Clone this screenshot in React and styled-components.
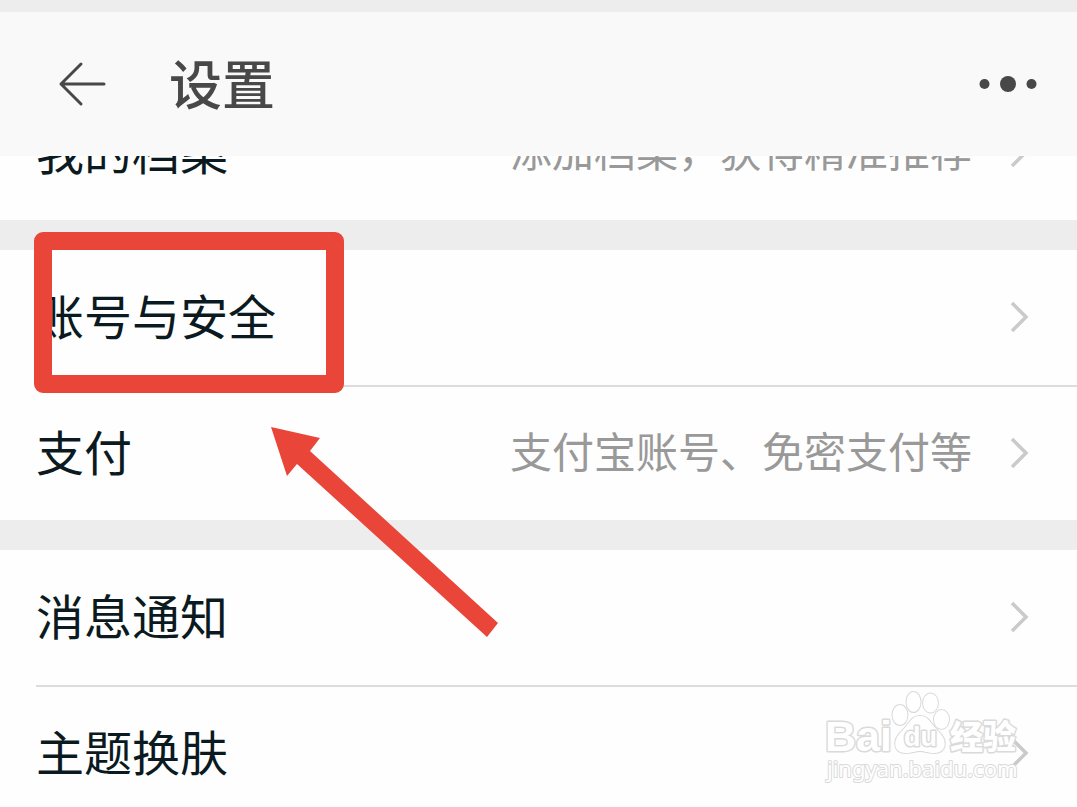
import React from "react";
import styled, { createGlobalStyle } from "styled-components";

const markColor = '#e94639';

const GlobalStyle = createGlobalStyle`
  * {
    box-sizing: border-box;
  }

  body {
    margin: 0;
    background: #fefefe;
    font-family: "Noto Sans CJK SC", "Noto Sans", sans-serif;
  }
`

const Screen = styled.div`
  position: relative;
  height: 100vh;
  overflow: hidden;
  background: #fefefe;
`

const Header = styled.header`
  position: sticky;
  top: 0;
  z-index: 1;
  display: flex;
  align-items: center;
  height: 156px;
  padding: 0 36px 0 56px;
  border-top: 12px solid #ededed;
  background: #f9f9f9;
`

const IconButton = styled.button`
  display: flex;
  padding: 0;
  border: none;
  background: none;
  color: #484848;
`

const Title = styled.h1`
  flex: 1;
  margin: 0 0 0 61px;
  padding-bottom: 4px;
  font-size: 53px;
  line-height: 72px;
  font-weight: 500;
  color: #484848;
`

/* the list is scrolled, its first row is half under the header */
const Content = styled.main`
  margin-top: -71px;
`

const Group = styled.ul`
  position: relative;
  margin: 0;
  padding: 0;
  list-style: none;

  &:not(:first-child) {
    border-top: 30px solid #ededed;
  }
`

const Item = styled.li`
  padding-left: 36px;
`

const Row = styled.a`
  display: flex;
  align-items: center;
  height: 135px;
  padding-right: 44px;
  color: #0a1a20;
  text-decoration: none;

  ${Item}:not(:first-child) > & {
    border-top: 2px solid #dcdcdc;
  }
`

const Label = styled.span`
  flex: 1;
  padding-bottom: 8px;
  font-size: 48px;
  line-height: 64px;
`

const Value = styled.span`
  margin-right: 37px;
  padding-bottom: 8px;
  font-size: 42px;
  line-height: 64px;
  color: #999;
`

const HighlightBox = styled.div`
  position: absolute;
  top: -18px;
  left: 34px;
  width: 310px;
  height: 161px;
  border: 18px solid ${markColor};
  border-radius: 9px;
`

const Arrow = styled.svg`
  position: absolute;
  top: 176px;
  left: 270px;
  z-index: 1;
  fill: ${markColor};
`

const Watermark = styled.svg`
  position: absolute;
  right: 53px;
  bottom: 19px;
  fill: #fff;
  stroke: #dadada;
  paint-order: stroke;
`

const groups = [
  [{ label: '我的档案', value: '添加档案，获得精准推荐' }],
  [
    { label: '账号与安全', marked: true },
    { label: '支付', value: '支付宝账号、免密支付等' },
  ],
  [{ label: '消息通知' }, { label: '主题换肤' }],
];

function Chevron() {
  return (
    <svg width="24" height="36" viewBox="0 0 24 36" fill="none" stroke="#cacaca" strokeWidth="3.5" aria-hidden="true">
      <path d="M3 3L17 17L3 31" />
    </svg>
  )
}

function BaiduMark() {
  return (
    <Watermark width="200" height="98" viewBox="0 0 200 98" strokeWidth="2" strokeLinejoin="round" aria-hidden="true">
      <text x="1" y="61" fontFamily="Liberation Sans, sans-serif" fontSize="43" fontWeight="700" strokeWidth="3">Bai</text>
      <g strokeWidth="2">
        <ellipse cx="76" cy="25" rx="7.5" ry="10" />
        <ellipse cx="89.5" cy="12" rx="7" ry="10" />
        <ellipse cx="106.5" cy="13" rx="7.5" ry="9.5" />
        <ellipse cx="117.500" cy="29.500" rx="7.5" ry="9.5" />
        <path d="M96 26C105 26 107 34 114 41C124 50 123 63 110 63C104 63 101 61 96 61C91 61 88 63 82 63C69 63 68 50 78 41C85 34 87 26 96 26Z" />
      </g>
      <text x="80" y="56" fontFamily="Liberation Sans, sans-serif" fontSize="27" fontWeight="700" strokeWidth="3">du</text>
      <text x="126" y="59" fontFamily="Noto Sans CJK SC, sans-serif" fontSize="33" fontWeight="900" strokeWidth="3">经验</text>
      <text x="3" y="87" fontFamily="Noto Sans, sans-serif" fontSize="22">jingyan.baidu.com</text>
    </Watermark>
  )
}

export default function App() {
  return (
    <Screen>
      <GlobalStyle />
      <Header>
        <IconButton type="button" aria-label="返回">
          <svg width="52" height="48" viewBox="0 0 52 48" fill="none" stroke="currentColor" strokeWidth="3" strokeLinecap="round" strokeLinejoin="round">
            <path d="M48 24H5M25 4L5 24L25 44" />
          </svg>
        </IconButton>
        <Title>设置</Title>
        <IconButton type="button" aria-label="更多">
          <svg width="64" height="24" viewBox="0 0 64 24" fill="currentColor">
            <circle cx="7.5" cy="12" r="5" />
            <circle cx="31" cy="12" r="8" />
            <circle cx="54.5" cy="12" r="5" />
          </svg>
        </IconButton>
      </Header>
      <Content>
        {groups.map((items) => (
          <Group key={items[0].label}>
            {items.map((item) => (
              <Item key={item.label}>
                <Row href="#">
                  <Label>{item.label}</Label>
                  {item.value && <Value>{item.value}</Value>}
                  <Chevron />
                </Row>
              </Item>
            ))}
            {items[0].marked && (
              <>
                <HighlightBox />
                <Arrow width="230" height="212" viewBox="0 0 230 212" aria-hidden="true">
                  <path d="M1 1L50 12L40 25L228 197L217 211L27 38L17 50Z" />
                </Arrow>
              </>
            )}
          </Group>
        ))}
      </Content>
      <BaiduMark />
    </Screen>
  )
}
